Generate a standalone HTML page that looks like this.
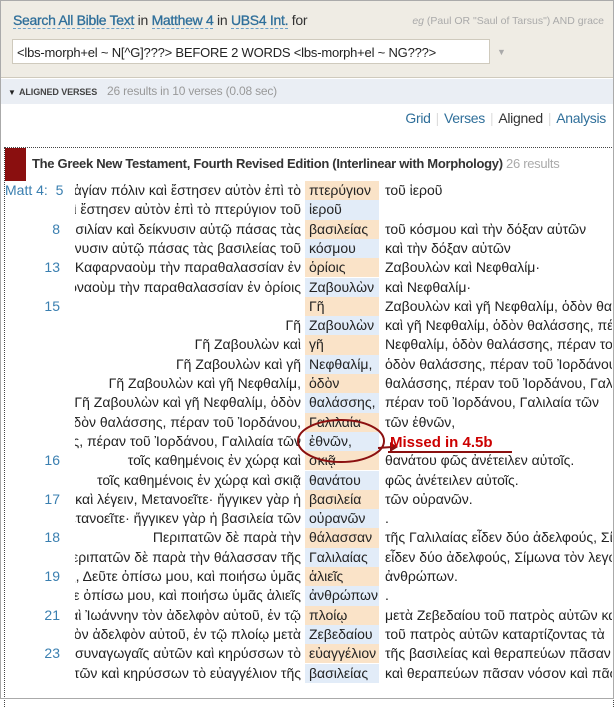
<!DOCTYPE html>
<html><head><meta charset="utf-8"><style>
*{margin:0;padding:0;box-sizing:border-box}
body{width:614px;height:699px;overflow:hidden;background:#fff;font-family:"Liberation Sans","DejaVu Sans",sans-serif;position:relative;color:#222}
.frame{position:absolute;left:0;top:0;width:614px;height:699px;border:1px solid #aaa;pointer-events:none}
.top{position:absolute;left:0;top:0;width:614px;height:78px;background:#efece4;border-bottom:1px solid #cfcabd}
.q{position:absolute;left:13px;top:12px;font-size:14px;color:#333;letter-spacing:-0.3px}
.q b{color:#2f6f9a;font-weight:normal;border-bottom:1px dashed #6aa0c8;-webkit-text-stroke:0.3px #2f6f9a}
.eg{position:absolute;right:10px;top:15px;font-size:10.5px;color:#aaa}
.inp{position:absolute;left:12px;top:39px;width:478px;height:25px;background:#fff;border:1px solid #cfcabd;font-size:13px;padding:5px 4px;color:#222;letter-spacing:-0.2px}
.dd{position:absolute;left:497px;top:47px;font-size:9px;color:#aaa}
.band{position:absolute;left:0;top:79px;width:614px;height:25px;background:#eaeef4}
.band span{position:absolute;top:5px;font-size:12px;white-space:nowrap}
.tabs{position:absolute;right:8px;top:110px;font-size:14px;color:#2f6f9a;letter-spacing:-0.3px}
.tabs i{font-style:normal;color:#ddd;margin:0 5px}
.box{position:absolute;left:4px;top:147px;width:610px;height:560px;border-top:1px dotted #444;border-left:1px dotted #444;border-right:1px dotted #444}
.book{position:absolute;left:5px;top:148px;width:21px;height:33px;background:#8a0f0f}
.title{position:absolute;left:32px;top:156px;font-size:13px;color:#333;font-weight:bold;white-space:nowrap;letter-spacing:-0.3px}
.title span{font-weight:normal;color:#aaa}
.row{position:absolute;left:0;width:614px;height:19.3px;font-size:14px;line-height:19.3px}
.l{position:absolute;left:75px;width:226px;text-align:right;white-space:nowrap;overflow:hidden;direction:rtl}
.l span{direction:ltr;unicode-bidi:embed}
.h{position:absolute;left:305px;width:74px;padding-left:4px;white-space:nowrap}
.o{background:#fae3c8}.b{background:#e2ecf8}
.r{position:absolute;left:385px;width:227px;white-space:nowrap;overflow:hidden}
.n{position:absolute;left:0;width:60px;text-align:right;color:#3a7fb0}
</style></head><body>
<div class="top">
<div class="q"><b>Search All Bible Text</b> in <b>Matthew 4</b> in <b>UBS4 Int.</b> for</div>
<div class="eg"><i>eg</i> (Paul OR "Saul of Tarsus") AND grace</div>
<div class="inp">&lt;lbs-morph+el ~ N[^G]???&gt; BEFORE 2 WORDS &lt;lbs-morph+el ~ NG???&gt;</div>
<div class="dd">▼</div>
</div>
<div class="band"><span style="left:8px;font-size:8px;top:9px">▼</span><span style="left:19px;font-size:9px;font-weight:bold;color:#444;top:8px;letter-spacing:-0.1px">ALIGNED VERSES</span><span style="left:107px;color:#999;letter-spacing:-0.2px">26 results in 10 verses (0.08 sec)</span></div>
<div class="tabs">Grid<i>|</i>Verses<i>|</i><span style="color:#333">Aligned</span><i>|</i>Analysis</div>
<div class="box"></div>
<div class="book"></div>
<div class="title">The Greek New Testament, Fourth Revised Edition (Interlinear with Morphology) <span>26 results</span></div>
<div id="rows"></div>
<svg style="position:absolute;left:0;top:0" width="614" height="699">
<ellipse cx="341" cy="441" rx="43" ry="21" fill="none" stroke="#8b1010" stroke-width="2"/>
<path d="M378 448 L392 447" stroke="#8b1010" stroke-width="2"/>
<path d="M390 442 L398 447 L390 452 Z" fill="#8b1010"/>
<line x1="388" y1="452" x2="512" y2="452" stroke="#8b1010" stroke-width="2"/>
<text x="390" y="447" font-family="Liberation Sans" font-weight="bold" font-size="15" fill="#c00">Missed in 4.5b</text>
</svg>
<div class="frame"></div>
<script>
const d=[
["Matt 4: 5","ἁγίαν πόλιν καὶ ἔστησεν αὐτὸν ἐπὶ τὸ","πτερύγιον","τοῦ ἱεροῦ"],
["","καὶ ἔστησεν αὐτὸν ἐπὶ τὸ πτερύγιον τοῦ","ἱεροῦ",""],
["8","πάντας βασιλίαν καὶ δείκνυσιν αὐτῷ πάσας τὰς","βασιλείας","τοῦ κόσμου καὶ τὴν δόξαν αὐτῶν"],
["","δείκνυσιν αὐτῷ πάσας τὰς βασιλείας τοῦ","κόσμου","καὶ τὴν δόξαν αὐτῶν"],
["13","εἰς Καφαρναοὺμ τὴν παραθαλασσίαν ἐν","ὁρίοις","Ζαβουλὼν καὶ Νεφθαλίμ·"],
["","Καφαρναοὺμ τὴν παραθαλασσίαν ἐν ὁρίοις","Ζαβουλὼν","καὶ Νεφθαλίμ·"],
["15","","Γῆ","Ζαβουλὼν καὶ γῆ Νεφθαλίμ, ὁδὸν θαλάσσης"],
["","Γῆ","Ζαβουλὼν","καὶ γῆ Νεφθαλίμ, ὁδὸν θαλάσσης, πέραν"],
["","Γῆ Ζαβουλὼν καὶ","γῆ","Νεφθαλίμ, ὁδὸν θαλάσσης, πέραν τοῦ"],
["","Γῆ Ζαβουλὼν καὶ γῆ","Νεφθαλίμ,","ὁδὸν θαλάσσης, πέραν τοῦ Ἰορδάνου"],
["","Γῆ Ζαβουλὼν καὶ γῆ Νεφθαλίμ,","ὁδὸν","θαλάσσης, πέραν τοῦ Ἰορδάνου, Γαλιλαία"],
["","Γῆ Ζαβουλὼν καὶ γῆ Νεφθαλίμ, ὁδὸν","θαλάσσης,","πέραν τοῦ Ἰορδάνου, Γαλιλαία τῶν"],
["","Νεφθαλίμ, ὁδὸν θαλάσσης, πέραν τοῦ Ἰορδάνου,","Γαλιλαία","τῶν ἐθνῶν,"],
["","θαλάσσης, πέραν τοῦ Ἰορδάνου, Γαλιλαία τῶν","ἐθνῶν,",""],
["16","τοῖς καθημένοις ἐν χώρᾳ καὶ","σκιᾷ","θανάτου φῶς ἀνέτειλεν αὐτοῖς."],
["","τοῖς καθημένοις ἐν χώρᾳ καὶ σκιᾷ","θανάτου","φῶς ἀνέτειλεν αὐτοῖς."],
["17","καὶ λέγειν, Μετανοεῖτε· ἤγγικεν γὰρ ἡ","βασιλεία","τῶν οὐρανῶν."],
["","Μετανοεῖτε· ἤγγικεν γὰρ ἡ βασιλεία τῶν","οὐρανῶν","."],
["18","Περιπατῶν δὲ παρὰ τὴν","θάλασσαν","τῆς Γαλιλαίας εἶδεν δύο ἀδελφούς, Σίμωνα"],
["","Περιπατῶν δὲ παρὰ τὴν θάλασσαν τῆς","Γαλιλαίας","εἶδεν δύο ἀδελφούς, Σίμωνα τὸν λεγόμενον"],
["19","αὐτοῖς, Δεῦτε ὀπίσω μου, καὶ ποιήσω ὑμᾶς","ἁλιεῖς","ἀνθρώπων."],
["","Δεῦτε ὀπίσω μου, καὶ ποιήσω ὑμᾶς ἁλιεῖς","ἀνθρώπων","."],
["21","καὶ Ἰωάννην τὸν ἀδελφὸν αὐτοῦ, ἐν τῷ","πλοίῳ","μετὰ Ζεβεδαίου τοῦ πατρὸς αὐτῶν καταρτ"],
["","Ἰωάννην τὸν ἀδελφὸν αὐτοῦ, ἐν τῷ πλοίῳ μετὰ","Ζεβεδαίου","τοῦ πατρὸς αὐτῶν καταρτίζοντας τὰ"],
["23","ταῖς συναγωγαῖς αὐτῶν καὶ κηρύσσων τὸ","εὐαγγέλιον","τῆς βασιλείας καὶ θεραπεύων πᾶσαν νόσον"],
["","συναγωγαῖς αὐτῶν καὶ κηρύσσων τὸ εὐαγγέλιον τῆς","βασιλείας","καὶ θεραπεύων πᾶσαν νόσον καὶ πᾶσαν"]];
let h="";d.forEach((r,i)=>{const y=181+i*19.3;
h+=`<div class="row" style="top:${y}px"><div class="n"${i==0?' style="left:5px;width:auto;text-align:left"':''}>${i==0?'Matt 4:&nbsp; 5':r[0]}</div><div class="l"><span>${r[1]}</span></div><div class="h ${i%2?'b':'o'}">${r[2]}</div><div class="r">${r[3]}</div></div>`});
document.getElementById("rows").innerHTML=h;
</script>
</body></html>
